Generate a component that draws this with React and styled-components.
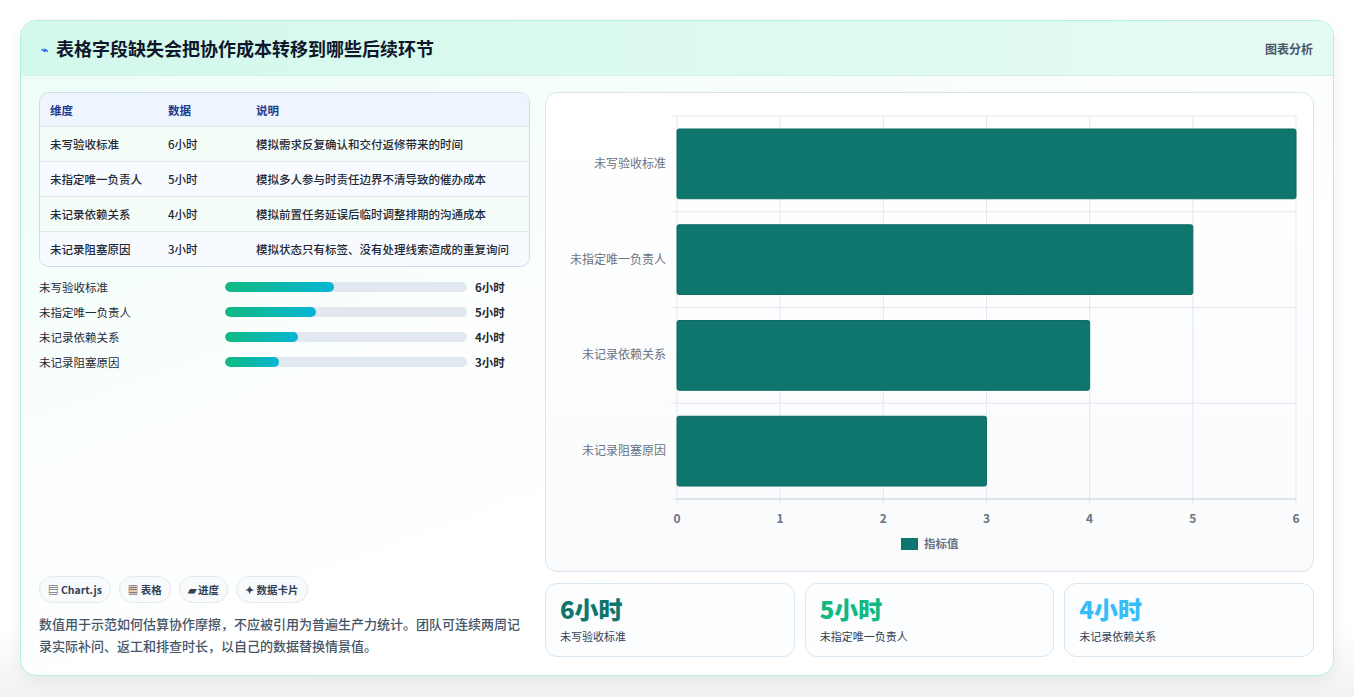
import React from "react";
import styled, { createGlobalStyle } from "styled-components";

const G = createGlobalStyle`
  body{margin:0;background:linear-gradient(#fff 90%,#f1f2f4);font-family:"Noto Sans CJK SC","Noto Sans",sans-serif;}
  *{box-sizing:border-box;}
`;
const Page = styled.div`padding:20px 20px 21px 20px;height:697px;`;
const Card = styled.div`height:656px;border:1px solid #b5eedc;border-radius:16px;overflow:hidden;
  background:linear-gradient(160deg,#ecfdf7 0%,#fbfefd 40%,#ffffff 70%);box-shadow:0 6px 18px rgba(0,0,0,.06);display:flex;flex-direction:column;`;
const Header = styled.div`height:55px;display:flex;align-items:center;justify-content:space-between;padding:0 20px 0 20px;
  background:linear-gradient(90deg,#d3f8ec,#e4fbf4);border-bottom:1px solid #d2f2e8;`;
const Title = styled.h1`margin:0;font-size:18px;font-weight:700;color:#0f172a;display:flex;align-items:center;gap:8px;`;
const Tag = styled.span`font-size:12px;color:#475569;font-weight:600;`;
const Body = styled.div`flex:1;display:grid;grid-template-columns:491px 769px;gap:15px;padding:16px 18px 18px 18px;`;
const Left = styled.div`display:flex;flex-direction:column;`;
const Table = styled.div`border:1px solid #cfdbe8;border-radius:10px;overflow:hidden;background:#fff;`;
const Row = styled.div`display:grid;grid-template-columns:118px 88px 1fr;height:${p=>p.h||35}px;align-items:center;padding-left:10px;
  font-size:11.5px;font-weight:${p=>p.head?600:500};color:${p=>p.head?"#1e3a8a":"#1f2937"};
  background:${p=>p.head?"#eef5fe":p.alt?"#f7faff":"#f4fcf8"};border-top:${p=>p.head?"none":"1px solid #e2e8f0"};`;
const Bars = styled.div`display:flex;flex-direction:column;gap:7px;margin-top:11px;`;
const BarRow = styled.div`display:grid;grid-template-columns:178px 242px 1fr;align-items:center;column-gap:8px;font-size:11.5px;color:#1f2937;height:18px;`;
const Track = styled.div`height:10px;border-radius:5px;background:#e2e8f0;overflow:hidden;`;
const Fill = styled.div`height:100%;border-radius:5px;background:linear-gradient(90deg,#10b981,#06b6d4);`;
const Val = styled.span`font-weight:700;font-size:11.5px;`;
const Spacer = styled.div`flex:1;`;
const Chips = styled.div`display:flex;gap:8px;`;
const Chip = styled.span`height:27px;padding:0 8px;border:1px solid #e2e8f0;border-radius:14px;background:#f8fafc;font-size:10.5px;font-weight:600;color:#334155;display:flex;align-items:center;gap:3px;`;
const Note = styled.p`margin:10px 0 0;font-size:13px;line-height:22px;color:#475569;font-weight:500;`;
const Right = styled.div`display:flex;flex-direction:column;gap:11px;`;
const ChartBox = styled.div`height:480px;border:1px solid #dbe4ec;border-radius:12px;background:linear-gradient(#fff,#f9fbfd);`;
const Kpis = styled.div`display:grid;grid-template-columns:repeat(3,1fr);gap:10px;`;
const Kpi = styled.div`height:74px;border:1px solid #d9e6ef;border-radius:12px;background:#fbfdff;padding:10px 14px;`;
const KV = styled.div`font-size:24px;font-weight:800;color:${p=>p.c};line-height:30px;`;
const KL = styled.div`font-size:11px;color:#334155;margin-top:4px;`;

const data=[
  ["未写验收标准",6,"模拟需求反复确认和交付返修带来的时间"],
  ["未指定唯一负责人",5,"模拟多人参与时责任边界不清导致的催办成本"],
  ["未记录依赖关系",4,"模拟前置任务延误后临时调整排期的沟通成本"],
  ["未记录阻塞原因",3,"模拟状态只有标签、没有处理线索造成的重复询问"],
];

function Chart(){
  const x0=131,w=619,y0=23,h=383,band=h/4,ff='"Noto Sans CJK SC",sans-serif';
  return(<svg width="769" height="480">
    {[0,1,2,3,4,5,6].map(i=><line key={i} x1={x0+i*w/6} x2={x0+i*w/6} y1={y0} y2={y0+h+6} stroke="#e5e7eb"/>)}
    {[0,1,2,3,4].map(i=><line key={i} x1={x0-6} x2={x0+w} y1={y0+i*band} y2={y0+i*band} stroke="#e5e7eb"/>)}
    <line x1={x0} x2={x0+w} y1={y0+h} y2={y0+h} stroke="#cbd5e1"/>
    {data.map((d,i)=>(<g key={i}>
      <rect x={x0} y={y0+i*band+13} width={d[1]*w/6} height={band-26} rx="2" fill="#0f766e" stroke="#0d6b63"/>
      <text x={x0-11} y={y0+i*band+band/2+4} textAnchor="end" fontSize="12" fill="#6b7280" fontFamily={ff}>{d[0]}</text>
    </g>))}
    {[0,1,2,3,4,5,6].map(i=><text key={i} x={x0+i*w/6} y={y0+h+24} textAnchor="middle" fontSize="12" fontWeight="700" fill="#6b7280" fontFamily={ff}>{i}</text>)}
    <rect x="355" y="445" width="17" height="12" fill="#0f766e"/>
    <text x="378" y="455" fontSize="11.5" fill="#6b7280" fontWeight="600" fontFamily={ff}>指标值</text>
  </svg>);
}

export default function App(){
  return(<Page><G/><Card>
    <Header><Title><span style={{color:"#2563eb",fontSize:12}}>⌁</span>表格字段缺失会把协作成本转移到哪些后续环节</Title><Tag>图表分析</Tag></Header>
    <Body>
      <Left>
        <Table>
          <Row head h={33}><span>维度</span><span>数据</span><span>说明</span></Row>
          {data.map((d,i)=><Row key={i} alt={i%2===1}><span>{d[0]}</span><span>{d[1]}小时</span><span>{d[2]}</span></Row>)}
        </Table>
        <Bars>{data.map((d,i)=><BarRow key={i}><span>{d[0]}</span><Track><Fill style={{width:d[1]*7.5+"%"}}/></Track><Val>{d[1]}小时</Val></BarRow>)}</Bars>
        <Spacer/>
        <Chips><Chip>▤ Chart.js</Chip><Chip>▦ 表格</Chip><Chip>▰ 进度</Chip><Chip>✦ 数据卡片</Chip></Chips>
        <Note>数值用于示范如何估算协作摩擦，不应被引用为普遍生产力统计。团队可连续两周记录实际补问、返工和排查时长，以自己的数据替换情景值。</Note>
      </Left>
      <Right>
        <ChartBox><Chart/></ChartBox>
        <Kpis>
          <Kpi><KV c="#0f766e">6小时</KV><KL>未写验收标准</KL></Kpi>
          <Kpi><KV c="#10b981">5小时</KV><KL>未指定唯一负责人</KL></Kpi>
          <Kpi><KV c="#38bdf8">4小时</KV><KL>未记录依赖关系</KL></Kpi>
        </Kpis>
      </Right>
    </Body>
  </Card></Page>);
}
